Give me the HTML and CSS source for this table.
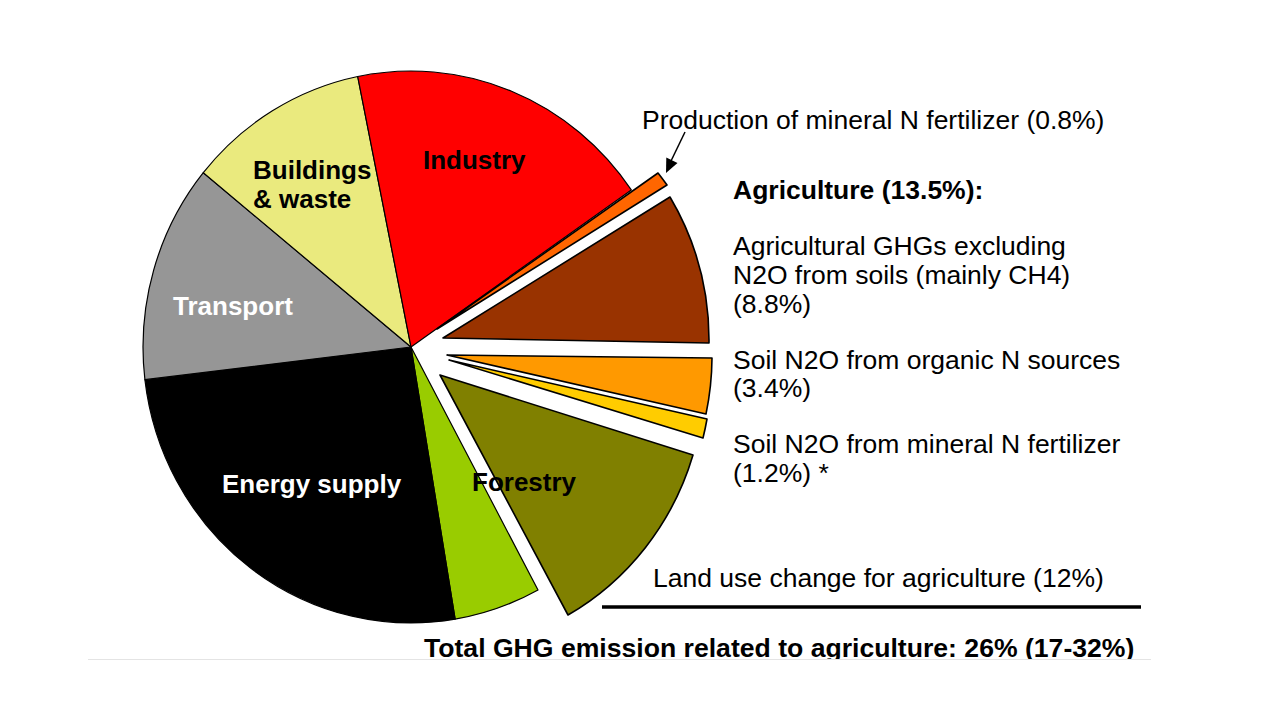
FILE: index.html
```html
<!DOCTYPE html>
<html lang="en">
<head>
<meta charset="utf-8">
<title>GHG emissions related to agriculture</title>
<link rel="stylesheet" href="styles.css">
</head>
<body>
<div class="figure">
<svg class="chart" width="1281" height="721" viewBox="0 0 1281 721" xmlns="http://www.w3.org/2000/svg">
  <defs>
    <clipPath id="crop"><rect x="0" y="0" width="1281" height="659"/></clipPath>
  </defs>

  <!-- main pie -->
  <g class="slices">
    <path class="s-green" d="M411,347 L538,590 A268,276 0 0 1 455.1,619.2 Z"/>
    <path class="s-black" d="M411,347 L455.1,619.2 A268,276 0 0 1 144.9,379.7 Z"/>
    <path class="s-gray" d="M411,347 L144.9,379.7 A268,276 0 0 1 203.3,172.7 Z"/>
    <path class="s-build" d="M411,347 L203.3,172.7 A268,276 0 0 1 357.7,76.5 Z"/>
    <path class="s-red" d="M411,347 L357.7,76.5 A268,276 0 0 1 631.3,189.9 Z"/>
  </g>

  <!-- exploded agriculture slices -->
  <g class="slices exploded">
    <path class="s-fert" d="M437,329 L658,173 A268,276 0 0 1 667,185 Z"/>
    <path class="s-brown" d="M443,338 L670,197 A268,276 0 0 1 709,343 Z"/>
    <path class="s-orange" d="M447,355 L712,358 A268,276 0 0 1 706,414 Z"/>
    <path class="s-yellow" d="M449,360 L707,419 A268,276 0 0 1 703,438 Z"/>
    <path class="s-olive" d="M440,375 L693,455 A268,276 0 0 1 568,615 Z"/>
  </g>

  <!-- pie labels -->
  <text class="lbl" x="253" y="179">Buildings</text>
  <text class="lbl" x="253" y="208">&amp; waste</text>
  <text class="lbl" x="423" y="169">Industry</text>
  <text class="lbl lbl-white" x="173" y="315">Transport</text>
  <text class="lbl lbl-white" x="222" y="493">Energy supply</text>
  <text class="lbl" x="472" y="491">Forestry</text>

  <!-- arrow -->
  <line class="arrow-line" x1="685" y1="132" x2="671" y2="161"/>
  <polygon class="arrow-head" points="666,173 677.5,163 666.3,157.6"/>

  <!-- right side labels -->
  <text class="txt" x="642" y="129">Production of mineral N fertilizer (0.8%)</text>
  <text class="txt txt-bold" x="733" y="199">Agriculture (13.5%):</text>
  <text class="txt" x="733" y="255">Agricultural GHGs excluding</text>
  <text class="txt" x="733" y="284">N2O from soils (mainly CH4)</text>
  <text class="txt" x="733" y="313">(8.8%)</text>
  <text class="txt" x="733" y="369">Soil N2O from organic N sources</text>
  <text class="txt" x="733" y="397">(3.4%)</text>
  <text class="txt" x="733" y="453">Soil N2O from mineral N fertilizer</text>
  <text class="txt" x="733" y="482">(1.2%) *</text>
  <text class="txt txt-land" x="653" y="587">Land use change for agriculture (12%)</text>

  <line class="rule" x1="602" y1="607" x2="1141" y2="607"/>

  <g clip-path="url(#crop)">
    <text class="txt txt-bold txt-total" x="424" y="657">Total GHG emission related to agriculture: 26% (17-32%)</text>
  </g>
  <line class="edge" x1="88" y1="659.5" x2="1151" y2="659.5"/>
</svg>
</div>
</body>
</html>
```

FILE: styles.css
```css
html, body {
  margin: 0;
  padding: 0;
  background: #ffffff;
}

.figure {
  width: 1281px;
  height: 721px;
  overflow: hidden;
}

.chart {
  display: block;
}

.slices path {
  stroke: #000000;
  stroke-width: 1.2;
  stroke-linejoin: round;
}

.exploded path {
  stroke-width: 1.6;
}

.s-green  { fill: #99cc00; }
.s-black  { fill: #000000; }
.s-gray   { fill: #969696; }
.s-build  { fill: #eaea7e; }
.s-red    { fill: #ff0000; }
.s-fert   { fill: #ff6600; }
.s-brown  { fill: #993300; }
.s-orange { fill: #ff9900; }
.s-yellow { fill: #ffcc00; }
.s-olive  { fill: #808000; }

.lbl {
  font-family: "Liberation Sans", Arial, sans-serif;
  font-weight: bold;
  font-size: 26px;
  fill: #000000;
}

.lbl-white {
  fill: #ffffff;
}

.txt {
  font-family: "Liberation Sans", Arial, sans-serif;
  font-size: 26.5px;
  fill: #000000;
}

.txt-bold {
  font-weight: bold;
}

.txt-land {
  font-size: 26.5px;
}

.txt-total {
  font-size: 26.6px;
}

.arrow-line {
  stroke: #000000;
  stroke-width: 1.5;
}

.arrow-head {
  fill: #000000;
}

.rule {
  stroke: #000000;
  stroke-width: 3.5;
}

.edge {
  stroke: #e4e4e4;
  stroke-width: 1;
}
```
